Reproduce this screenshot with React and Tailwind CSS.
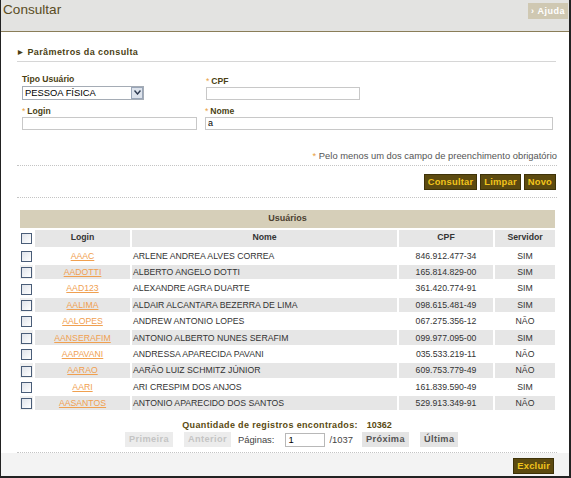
import React from 'react';

const rows = [
  ['AAAC', 'ARLENE ANDREA ALVES CORREA', '846.912.477-34', 'SIM'],
  ['AADOTTI', 'ALBERTO ANGELO DOTTI', '165.814.829-00', 'SIM'],
  ['AAD123', 'ALEXANDRE AGRA DUARTE', '361.420.774-91', 'SIM'],
  ['AALIMA', 'ALDAIR ALCANTARA BEZERRA DE LIMA', '098.615.481-49', 'SIM'],
  ['AALOPES', 'ANDREW ANTONIO LOPES', '067.275.356-12', 'NÃO'],
  ['AANSERAFIM', 'ANTONIO ALBERTO NUNES SERAFIM', '099.977.095-00', 'SIM'],
  ['AAPAVANI', 'ANDRESSA APARECIDA PAVANI', '035.533.219-11', 'NÃO'],
  ['AARAO', 'AARÃO LUIZ SCHMITZ JÚNIOR', '609.753.779-49', 'NÃO'],
  ['AARI', 'ARI CRESPIM DOS ANJOS', '161.839.590-49', 'SIM'],
  ['AASANTOS', 'ANTONIO APARECIDO DOS SANTOS', '529.913.349-91', 'NÃO'],
];

const Box = () => (
  <span className="inline-block w-[11px] h-[11px] border border-[#4a5d78] bg-gradient-to-br from-[#dfe3ea] to-white align-middle" />
);

const Label = ({ req, children }) => (
  <div className="text-[8.6px] font-bold text-[#4b3f14] leading-[11px]">
    {req && <span className="text-[#e8a040] font-normal mr-[2px]">*</span>}
    {children}
  </div>
);

const Btn = ({ children }) => (
  <button className="h-[16px] px-[3px] bg-[#5c4a10] border border-[#3e3208] text-[#f2c41c] text-[9.4px] font-bold leading-[14px] tracking-[0.2px]">
    {children}
  </button>
);

const PageBtn = ({ children, off }) => (
  <span className={`inline-block h-[15px] px-[4px] text-[9.2px] font-bold leading-[15px] tracking-[0.4px] ${off ? 'bg-[#ececec] text-[#c4c4c4]' : 'bg-[#e4e4e4] text-[#555]'}`}>
    {children}
  </span>
);

export default function App() {
  return (
    <div
      className="w-[571px] h-[478px] bg-white border-l border-r-2 border-b-2 border-[#222] flex flex-col overflow-hidden"
      style={{ fontFamily: '"Liberation Sans", Arial, sans-serif' }}
    >
      <div className="h-[32px] bg-[#e3e3e1] border-b border-[#8a7d58] flex items-start justify-between pl-[2px] shrink-0">
        <div className="text-[13.6px] text-[#5a4c1e] leading-[18px] mt-[1px]">Consultar</div>
        <div className="mt-[3px] mr-[1px] h-[16px] px-[3px] bg-[#cfc8b2] text-white text-[9px] font-bold leading-[16px] tracking-[0.5px]">
          <span className="mr-[3px]">›</span>Ajuda
        </div>
      </div>

      <div className="px-[16px] pt-[14px] flex flex-col">
        <div className="flex items-center text-[9px] font-bold text-[#4b3f14] tracking-[0.4px] pb-[1px] border-b border-[#d6d6d6] w-[539px]">
          <span className="text-[6px] mr-[4px] ml-[1px]">▶</span>Parâmetros da consulta
        </div>

        <div className="mt-[12px] pl-[5px] flex">
          <div className="w-[184px]">
            <Label>Tipo Usuário</Label>
            <div className="mt-[1px] w-[122px] h-[14px] border border-[#a5acb5] flex items-center justify-between bg-white">
              <span className="text-[9.4px] text-black pl-[2px] leading-[12px]">PESSOA FÍSICA</span>
              <span className="w-[12px] h-[12px] bg-[#dde3ec] border border-[#9aa6b8] flex items-center justify-center">
                <svg width="7" height="5" viewBox="0 0 7 5"><path d="M0.5 0.5 L3.5 4 L6.5 0.5" stroke="#2d3a50" strokeWidth="1.4" fill="none" /></svg>
              </span>
            </div>
          </div>
          <div className="pt-[2px]">
            <Label req>CPF</Label>
            <div className="w-[154px] h-[13px] border border-[#c8c8c8] bg-white" />
          </div>
        </div>

        <div className="mt-[6px] pl-[5px] flex">
          <div className="w-[184px]">
            <Label req>Login</Label>
            <div className="w-[175px] h-[13px] border border-[#c8c8c8] bg-white" />
          </div>
          <div>
            <Label req>Nome</Label>
            <div className="w-[348px] h-[13px] border border-[#c8c8c8] bg-white text-[9px] leading-[11px] pl-[2px] text-black">a</div>
          </div>
        </div>

        <div className="mt-[20px] w-[540px] text-right text-[9.4px] text-[#555] leading-[12px]">
          <span className="text-[#e8a040]">*</span> Pelo menos um dos campo de preenchimento obrigatório
        </div>

        <div className="mt-[3px] w-[540px] border-t border-dotted border-[#c4c4c4]" />
        <div className="w-[540px] flex justify-end gap-[3px] pt-[8px] pb-[7px] pr-[1px]">
          <Btn>Consultar</Btn>
          <Btn>Limpar</Btn>
          <Btn>Novo</Btn>
        </div>
        <div className="w-[540px] border-t border-dotted border-[#c4c4c4]" />

        <table className="mt-[10px] ml-[1px] w-[539px] border-separate border-spacing-[2px] text-[8.7px] text-[#333] -mx-[2px]">
          <thead>
            <tr>
              <th colSpan={5} className="h-[18px] p-0 bg-[#d6cfb9] text-[#4b4030] text-[9px] font-bold text-center">Usuários</th>
            </tr>
            <tr className="text-[#333]">
              <th className="w-[13px] h-[17px] p-0"><Box /></th>
              <th className="w-[95px] p-0 bg-[#e6e6e6] font-bold">Login</th>
              <th className="p-0 bg-[#e6e6e6] font-bold">Nome</th>
              <th className="w-[94px] p-0 bg-[#e6e6e6] font-bold">CPF</th>
              <th className="w-[60px] p-0 bg-[#e6e6e6] font-bold">Servidor</th>
            </tr>
          </thead>
          <tbody>
            {rows.map((r, i) => {
              const bg = i % 2 ? 'bg-[#e6e6e6]' : 'bg-white';
              return (
                <tr key={r[0]} className="h-[14.4px]">
                  <td className={`p-0 text-center leading-[12px] ${i % 2 ? 'bg-[#f0f0f0]' : ''}`}><Box /></td>
                  <td className={`${bg} text-center p-0 leading-[12px]`}>
                    <span className="text-[#f0a050] underline">{r[0]}</span>
                  </td>
                  <td className={`${bg} p-0 pl-[1px] leading-[12px]`}>{r[1]}</td>
                  <td className={`${bg} text-center p-0 leading-[12px]`}>{r[2]}</td>
                  <td className={`${bg} text-center p-0 leading-[12px]`}>{r[3]}</td>
                </tr>
              );
            })}
          </tbody>
        </table>

        <div className="mt-[7px] text-center w-[540px] text-[9px] font-bold text-[#5a4a10] tracking-[0.35px] leading-[12px]">
          Quantidade de registros encontrados: <span className="ml-[6px] tracking-normal">10362</span>
        </div>
        <div className="mt-[1px] flex items-center pl-[108px] text-[9.4px] text-[#444]">
          <PageBtn off>Primeira</PageBtn>
          <span className="ml-[11px]"><PageBtn off>Anterior</PageBtn></span>
          <span className="ml-[7px]">Páginas:</span>
          <span className="ml-[11px] w-[40px] h-[14px] border border-[#b8b8b8] text-black leading-[12px] pl-[2px]">1</span>
          <span className="ml-[4px]">/1037</span>
          <span className="ml-[9px]"><PageBtn>Próxima</PageBtn></span>
          <span className="ml-[11px]"><PageBtn>Última</PageBtn></span>
        </div>
      </div>

      <div className="mt-[5px] mx-[16px] w-[540px] border-t border-dotted border-[#c4c4c4]" />
      <div className="flex-1 bg-[#f3f3f3] flex justify-end items-start pt-[5px] pr-[15px]">
        <Btn>Excluir</Btn>
      </div>
    </div>
  );
}
